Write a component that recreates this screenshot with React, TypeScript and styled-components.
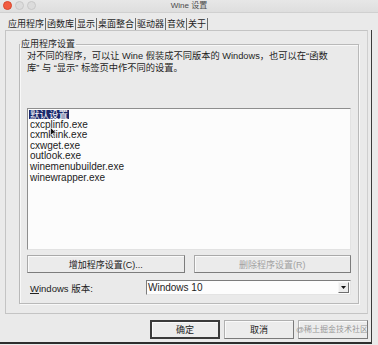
import React from 'react';
import styled, { createGlobalStyle } from 'styled-components';

const tabs = ['应用程序', '函数库', '显示', '桌面整合', '驱动器', '音效', '关于'];
const programs = [
  'cxcplinfo.exe',
  'cxmklink.exe',
  'cxwget.exe',
  'outlook.exe',
  'winemenubuilder.exe',
  'winewrapper.exe',
];

const App: React.FC = () => {
  return (
    <>
      <GlobalStyle />
      <Window>
        <TitleBar>
          <Lights>
            <Light $color="#f25c40" $edge="#d8472d" />
            <Light />
            <Light />
          </Lights>
          <Title>Wine 设置</Title>
        </TitleBar>

        <TabBar>
          {tabs.map((t) => (
            <Tab key={t}>{t}</Tab>
          ))}
        </TabBar>

        <Body>
          <Panel>
            <Group>
              <Legend>应用程序设置</Legend>
              <Desc>
                <DescLine>对不同的程序，可以让 Wine 假装成不同版本的 Windows，也可以在“函数</DescLine>
                <DescLine>库” 与 “显示” 标签页中作不同的设置。</DescLine>
              </Desc>

              <ListBox>
                <Item>
                  <Selected>默认设置</Selected>
                </Item>
                {programs.map((p) => (
                  <Item key={p}>{p}</Item>
                ))}
              </ListBox>

              <ButtonRow>
                <PushButton>增加程序设置(C)...</PushButton>
                <PushButton disabled>删除程序设置(R)</PushButton>
              </ButtonRow>

              <VersionRow>
                <VersionLabel>
                  <u>W</u>indows 版本:
                </VersionLabel>
                <Select>
                  <SelectText>Windows 10</SelectText>
                  <DropButton>
                    <svg width="5" height="3" viewBox="0 0 5 3">
                      <path d="M0 0h5L2.5 3z" fill="#111" />
                    </svg>
                  </DropButton>
                </Select>
              </VersionRow>
            </Group>
          </Panel>

          <DialogButtons>
            <DialogButton $default>确定</DialogButton>
            <DialogButton>取消</DialogButton>
            <DialogButton aria-label="应用" />
          </DialogButtons>
        </Body>

        <Cursor width="7" height="10" viewBox="0 0 7 10">
          <path d="M0.5 0.5v8l2-2 1.5 3 1-0.5-1.5-3h2.8z" fill="#111" stroke="#fff" strokeWidth="0.6" />
        </Cursor>
        <Watermark>@稀土掘金技术社区</Watermark>
      </Window>
    </>
  );
};

const GlobalStyle = createGlobalStyle`
  html, body {
    margin: 0;
    padding: 0;
    background: #e9e9e9;
  }
  * {
    box-sizing: border-box;
  }
`;

const Window = styled.div`
  position: relative;
  width: 378px;
  height: 345px;
  overflow: hidden;
  display: flex;
  flex-direction: column;
  background: #eaeaea;
  font-family: 'Liberation Sans', 'Noto Sans CJK SC', sans-serif;
  color: #1e1e1e;
`;

const TitleBar = styled.div`
  height: 13px;
  display: grid;
  grid-template-columns: 1fr auto 1fr;
  align-items: center;
  background: linear-gradient(#e7e7e7, #dedede);
  border-bottom: 1px solid #d0d0d0;
`;

const Lights = styled.div`
  display: flex;
  gap: 3px;
  padding-left: 3px;
  margin-top: -2px;
`;

const Light = styled.span<{ $color?: string; $edge?: string }>`
  width: 9px;
  height: 9px;
  border-radius: 50%;
  background: ${(p) => p.$color || '#dcdcdc'};
  border: 1px solid ${(p) => p.$edge || '#c8c8c8'};
`;

const Title = styled.div`
  font-size: 8px;
  line-height: 12px;
  color: #4a4a4a;
`;

const TabBar = styled.div`
  height: 17px;
  display: flex;
  align-items: flex-end;
  padding-left: 7px;
`;

const Tab = styled.div`
  height: 12px;
  line-height: 12px;
  font-size: 9px;
  padding: 0 1px;
  border-right: 1px solid #6c6c6c;
  color: #1e1e1e;
`;

const Body = styled.div`
  flex: 1;
  display: flex;
  flex-direction: column;
  margin-right: 6px;
  margin-bottom: 1px;
  border-right: 1px solid #3c3c3c;
  border-bottom: 2px solid #2e2e2e;
`;

const Panel = styled.div`
  margin: 0 3px 0 5px;
  padding: 7px 8px 9px 13px;
  border: 1px solid #c4c4c4;
  border-right-color: #cfcfcf;
`;

const Group = styled.fieldset`
  margin: 0;
  padding: 0 7px 8px 7px;
  border: 1px solid #b9b9b9;
  box-shadow: 1px 1px 0 #f8f8f8, inset 1px 1px 0 #f8f8f8;
  min-width: 0;
`;

const Legend = styled.legend`
  margin-left: -7px;
  padding: 0 1px;
  font-size: 9px;
  line-height: 12px;
  color: #1e1e1e;
`;

const Desc = styled.div`
  font-size: 9.25px;
  line-height: 12px;
  color: #1e1e1e;
`;

const DescLine = styled.div`
  white-space: nowrap;
`;

const ListBox = styled.div`
  margin-top: 34px;
  height: 142px;
  padding-left: 1px;
  background: #fcfcfc;
  border: 1px solid;
  border-color: #8e8e8e #e2e2e2 #e2e2e2 #8e8e8e;
  font-size: 10px;
`;

const Item = styled.div`
  height: 10.6px;
  line-height: 10.6px;
  padding-left: 1px;
  white-space: nowrap;
  color: #222;
`;

const Selected = styled.span`
  display: inline-block;
  margin-left: -1px;
  padding: 0 1px;
  line-height: 9.5px;
  font-size: 9.5px;
  vertical-align: middle;
  background: #1a286b;
  color: #fff;
`;

const ButtonRow = styled.div`
  margin-top: 5px;
  display: grid;
  grid-template-columns: 1fr 1fr;
  gap: 9px;
`;

const PushButton = styled.button`
  height: 18px;
  padding: 0;
  font-family: inherit;
  font-size: 9px;
  color: ${(p) => (p.disabled ? '#a2a2a2' : '#222')};
  background: #ebebeb;
  border: 1px solid;
  border-color: #a9a9a9 #7c7c7c #7c7c7c #a9a9a9;
  box-shadow: inset 1px 1px 0 #fafafa;
`;

const VersionRow = styled.div`
  margin-top: 7px;
  display: grid;
  grid-template-columns: 119px 1fr;
  align-items: center;
  height: 15px;
`;

const VersionLabel = styled.div`
  padding-left: 3px;
  font-size: 9.5px;
  color: #222;

  u {
    text-decoration-thickness: 1px;
  }
`;

const Select = styled.div`
  height: 15px;
  display: flex;
  align-items: center;
  justify-content: space-between;
  padding: 0 1px 0 1px;
  background: #fdfdfd;
  border: 1px solid;
  border-color: #7c7c7c #e4e4e4 #e4e4e4 #7c7c7c;
`;

const SelectText = styled.span`
  font-size: 10px;
  color: #222;
`;

const DropButton = styled.span`
  width: 11px;
  height: 11px;
  display: flex;
  align-items: center;
  justify-content: center;
  background: #ececec;
  border: 1px solid;
  border-color: #f6f6f6 #6e6e6e #6e6e6e #f6f6f6;
`;

const DialogButtons = styled.div`
  margin-top: 6px;
  display: flex;
  justify-content: flex-end;
  gap: 4px;
  padding-right: 3px;
`;

const DialogButton = styled.button<{ $default?: boolean }>`
  width: 70px;
  height: 19px;
  padding: 0;
  font-family: inherit;
  font-size: 9px;
  color: #222;
  background: #ececec;
  border: ${(p) => (p.$default ? '2px solid #3a3a3a' : '1px solid')};
  border-color: ${(p) => (p.$default ? '#3a3a3a' : '#b0b0b0 #7a7a7a #7a7a7a #b0b0b0')};
  box-shadow: inset 1px 1px 0 #fafafa;
`;

const Cursor = styled.svg`
  position: absolute;
  left: 50px;
  top: 127px;
`;

const Watermark = styled.div`
  position: absolute;
  left: 296px;
  top: 324px;
  font-size: 8px;
  line-height: 12px;
  color: rgba(140, 140, 140, 0.9);
  white-space: nowrap;
`;

export default App;
